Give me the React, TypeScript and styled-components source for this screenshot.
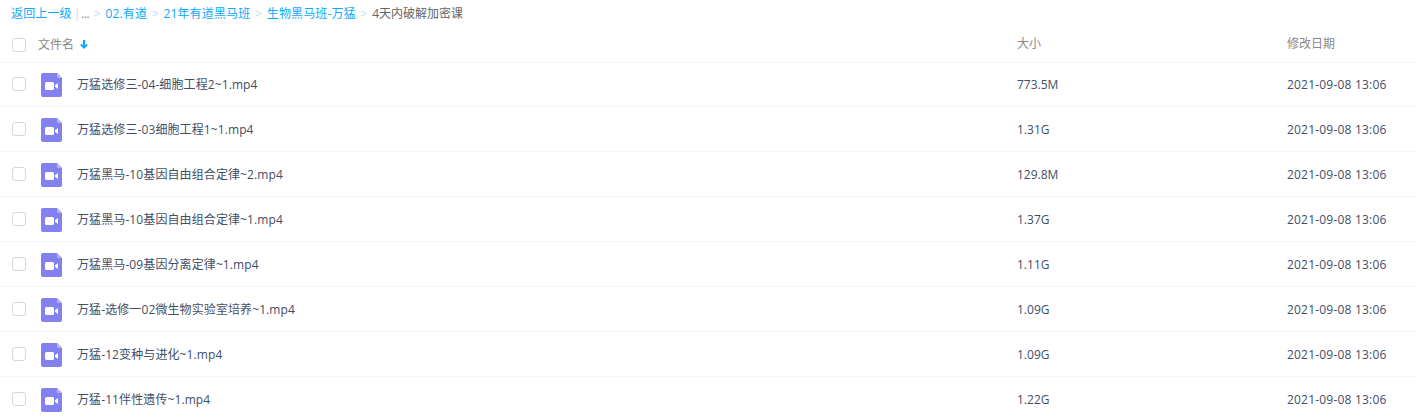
import { createGlobalStyle } from 'styled-components';
import styled from 'styled-components';

const GlobalStyle = createGlobalStyle`
  html, body {
    margin: 0;
    padding: 0;
    background: #fff;
    overflow: hidden;
  }
  body {
    font-family: 'Open Sans', 'Noto Sans CJK SC', sans-serif;
    font-size: 12px;
    color: #424e67;
  }
`;

const Page = styled.div`
  width: 1416px;
  height: 420px;
  overflow: hidden;
`;

const Breadcrumb = styled.div`
  display: flex;
  align-items: center;
  height: 26px;
  padding-left: 11px;
  white-space: nowrap;
`;

const CrumbLink = styled.a`
  color: #09aaff;
  letter-spacing: 0.15px;
`;

const Divider = styled.span`
  color: #c5d8f3;
  margin: 0 1px 0 2px;
`;

const Dots = styled.span`
  color: #878c9c;
  letter-spacing: -0.6px;
`;

const Chevron = styled.span`
  color: #c5d8f3;
  margin: 0 4.75px;
`;

const Current = styled.span`
  color: #666;
`;

const HeaderRow = styled.div`
  display: grid;
  grid-template-columns: 1017px 270px 1fr;
  align-items: center;
  height: 36px;
  border-bottom: 1px solid #f5f6fa;
  color: #888;
`;

const HeaderLabel = styled.div`
  margin-bottom: 2px;
`;

const Rows = styled.div`
  display: flex;
  flex-direction: column;
  margin-top: -1px;
`;

const Row = styled.div`
  display: grid;
  grid-template-columns: 1017px 270px 1fr;
  align-items: center;
  height: 44px;
  border-bottom: 1px solid #f5f6fa;
`;

const NameCell = styled.div`
  display: flex;
  align-items: center;
  padding-left: 12px;
`;

const Box = styled.span`
  flex: none;
  box-sizing: border-box;
  width: 14px;
  height: 14px;
  border: 1px solid #d4d7de;
  border-radius: 3px;
  background: #fff;
`;

const HeaderBox = styled(Box)`
  margin-top: 2px;
`;

const HeaderName = styled.span`
  margin-left: 12px;
  margin-right: 6px;
`;

const FileName = styled.span`
  margin-left: 15px;
  white-space: nowrap;
  letter-spacing: 0.1px;
`;

const DateText = styled.div`
  letter-spacing: 0.2px;
`;

const IconSlot = styled.svg`
  flex: none;
  margin: 2px 0 0 15px;
`;

function VideoIcon() {
  return (
    <IconSlot width="21" height="24" viewBox="0 0 21 24">
      <path
        d="M2 0h14l5 5v17a2 2 0 0 1-2 2H2a2 2 0 0 1-2-2V2a2 2 0 0 1 2-2z"
        fill="#8381f0"
      />
      <path d="M16 0l5 5h-3.5a1.5 1.5 0 0 1-1.5-1.5z" fill="#b5b3f7" />
      <rect x="4" y="9" width="9" height="8" rx="1.5" fill="#fff" />
      <path d="M14 12.2l3-2.2v6l-3-2.2z" fill="#fff" />
    </IconSlot>
  );
}

function SortArrow() {
  return (
    <svg width="8" height="9" viewBox="0 0 8 9">
      <path d="M4 0v7.5M.8 4.4L4 7.6l3.2-3.2" fill="none" stroke="#09aaff" strokeWidth="2" />
    </svg>
  );
}

const files = [
  { name: '万猛选修三-04-细胞工程2~1.mp4', size: '773.5M' },
  { name: '万猛选修三-03细胞工程1~1.mp4', size: '1.31G' },
  { name: '万猛黑马-10基因自由组合定律~2.mp4', size: '129.8M' },
  { name: '万猛黑马-10基因自由组合定律~1.mp4', size: '1.37G' },
  { name: '万猛黑马-09基因分离定律~1.mp4', size: '1.11G' },
  { name: '万猛-选修一02微生物实验室培养~1.mp4', size: '1.09G' },
  { name: '万猛-12变种与进化~1.mp4', size: '1.09G' },
  { name: '万猛-11伴性遗传~1.mp4', size: '1.22G' },
];

export default function App() {
  return (
    <Page>
      <GlobalStyle />
      <Breadcrumb>
        <CrumbLink>返回上一级</CrumbLink>
        <Divider>|</Divider>
        <Dots>...</Dots>
        <Chevron>&gt;</Chevron>
        <CrumbLink>02.有道</CrumbLink>
        <Chevron>&gt;</Chevron>
        <CrumbLink>21年有道黑马班</CrumbLink>
        <Chevron>&gt;</Chevron>
        <CrumbLink>生物黑马班-万猛</CrumbLink>
        <Chevron>&gt;</Chevron>
        <Current>4天内破解加密课</Current>
      </Breadcrumb>
      <HeaderRow>
        <NameCell>
          <HeaderBox />
          <HeaderName>文件名</HeaderName>
          <SortArrow />
        </NameCell>
        <HeaderLabel>大小</HeaderLabel>
        <HeaderLabel>修改日期</HeaderLabel>
      </HeaderRow>
      <Rows>
        {files.map((file) => (
          <Row key={file.name}>
            <NameCell>
              <Box />
              <VideoIcon />
              <FileName>{file.name}</FileName>
            </NameCell>
            <div>{file.size}</div>
            <DateText>2021-09-08 13:06</DateText>
          </Row>
        ))}
      </Rows>
    </Page>
  );
}
